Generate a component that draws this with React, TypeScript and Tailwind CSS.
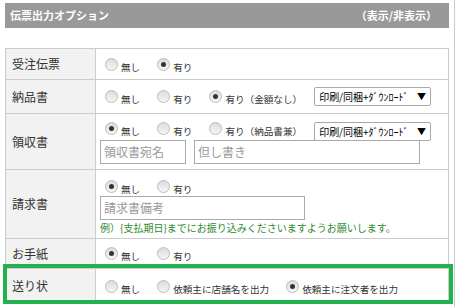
import React from 'react';

const Radio: React.FC<{ checked?: boolean }> = ({ checked }) => (
  <span className="ml-[5px] w-[13px] h-[13px] rounded-full border border-[#bcbcbc] bg-gradient-to-b from-[#dcdcdc] to-[#f6f6f6] flex items-center justify-center shrink-0">
    {checked && <span className="w-[5px] h-[5px] rounded-full bg-[#333]" />}
  </span>
);

const Opt: React.FC<{ label: string; checked?: boolean; last?: boolean }> = ({ label, checked, last }) => (
  <span className={`inline-flex items-end ${last ? '' : 'mr-[12px]'}`}>
    <Radio checked={checked} />
    <span className="ml-[3px] text-[9.6px] leading-none translate-y-[2px] text-[#333] whitespace-nowrap">{label}</span>
  </span>
);

const Select: React.FC = () => (
  <div className="w-[117px] h-[19px] border border-[#a9a9a9] rounded-[2px] bg-white flex items-center justify-between pl-[4px] pr-[4px] text-[10px] text-black leading-none whitespace-nowrap">
    <span>印刷/同梱+ﾀﾞｳﾝﾛｰﾄﾞ</span>
    <span className="text-[9px]">▼</span>
  </div>
);

const Row: React.FC<{ label: string; h: string; children: React.ReactNode; cell?: string; last?: boolean }> = ({ label, h, children, cell, last }) => (
  <div className={`flex ${h} ${last ? '' : 'border-b border-[#ccc]'}`}>
    <div className="w-[90px] shrink-0 bg-[#f2f2f2] border-r border-[#ccc] flex items-center pl-[6px] text-[12px] text-[#333]">{label}</div>
    <div className={`flex-1 pl-[4px] ${cell ?? 'flex items-center'}`}>{children}</div>
  </div>
);

const App: React.FC = () => {
  return (
    <div className="relative w-[455px] h-[307px] bg-white border-r border-[#ccc] overflow-hidden" style={{ fontFamily: '"Noto Sans CJK JP", "Noto Sans", sans-serif' }}>
      <div className="mt-[3px] ml-[5px] w-[444px] h-[25px] bg-[#999] flex items-center justify-between pl-[5px] pr-[12px] text-white font-bold text-[11px]">
        <span>伝票出力オプション</span>
        <span>（表示/非表示）</span>
      </div>

      <div className="mt-[20px] ml-[5px] w-[444px] border-t border-l border-r border-[#ccc]">
        <Row label="受注伝票" h="h-[31px]">
          <Opt label="無し" />
          <Opt label="有り" checked />
        </Row>
        <Row label="納品書" h="h-[34px]">
          <Opt label="無し" />
          <Opt label="有り" />
          <Opt label="有り（金額なし）" checked last />
          <span className="ml-[12px]"><Select /></span>
        </Row>
        <Row label="領収書" h="h-[56px]" cell="flex flex-col pt-[8px]">
          <div className="flex items-start h-[18px]">
            <span className="flex items-end">
              <Opt label="無し" checked />
              <Opt label="有り" />
              <Opt label="有り（納品書兼）" last />
            </span>
            <span className="ml-[12px]"><Select /></span>
          </div>
          <div className="flex gap-[8px]">
            <div className="w-[86px] h-[24px] border border-[#a9a9a9] flex items-center pl-[3px] text-[12px] text-[#999]">領収書宛名</div>
            <div className="w-[226px] h-[24px] border border-[#a9a9a9] flex items-center pl-[3px] text-[12px] text-[#999]">但し書き</div>
          </div>
        </Row>
        <Row label="請求書" h="h-[69px]" cell="flex flex-col pt-[8px]">
          <div className="flex items-end h-[15px]">
            <Opt label="無し" checked />
            <Opt label="有り" />
          </div>
          <div className="mt-[3px] w-[205px] h-[24px] border border-[#a9a9a9] flex items-center pl-[3px] text-[12px] text-[#999]">請求書備考</div>
          <div className="mt-[3px] text-[10px] leading-none text-[#2f8a2f] whitespace-nowrap">例）{'{'}支払期日{'}'}までにお振り込みくださいますようお願いします。</div>
        </Row>
        <Row label="お手紙" h="h-[30px]">
          <Opt label="無し" checked />
          <Opt label="有り" />
        </Row>
        <Row label="送り状" h="h-[34px]" last>
          <Opt label="無し" />
          <Opt label="依頼主に店舗名を出力" />
          <Opt label="依頼主に注文者を出力" checked last />
        </Row>
      </div>

      <div className="absolute left-[3px] top-[264px] w-[450px] h-[40px] border-[4px] border-[#22b14c]" />
    </div>
  );
};

export default App;
